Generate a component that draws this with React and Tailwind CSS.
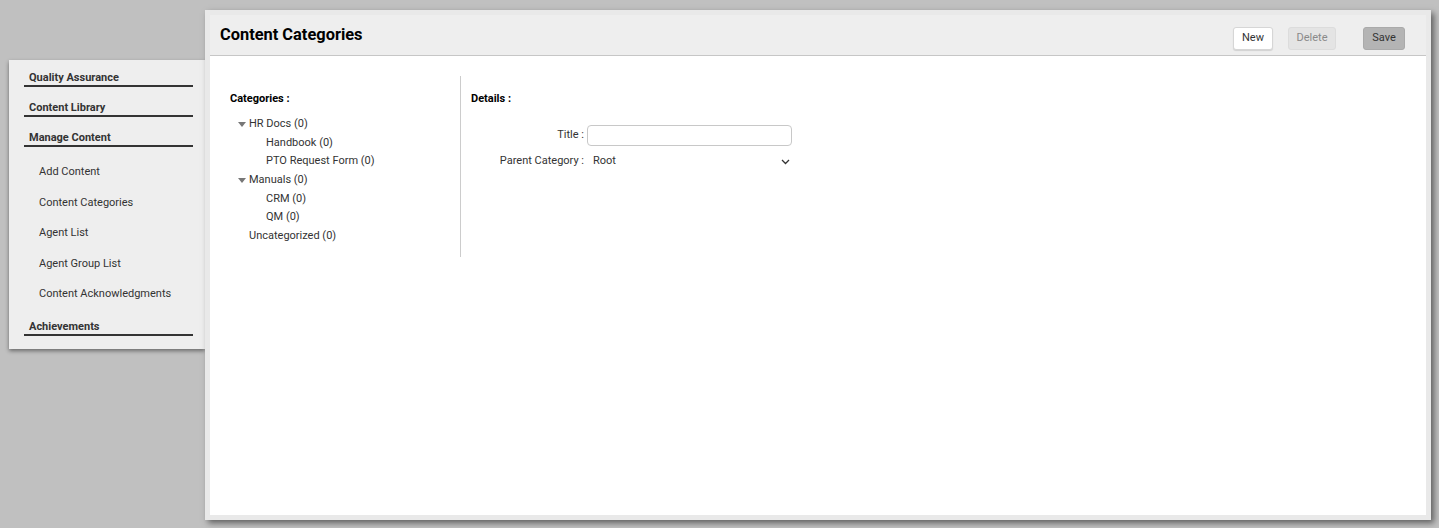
import React from 'react';

const sidebarLinks = ['Add Content', 'Content Categories', 'Agent List', 'Agent Group List', 'Content Acknowledgments'];

const tree = [
  { name: 'HR Docs', count: 0, open: true, children: [{ name: 'Handbook', count: 0 }, { name: 'PTO Request Form', count: 0 }] },
  { name: 'Manuals', count: 0, open: true, children: [{ name: 'CRM', count: 0 }, { name: 'QM', count: 0 }] },
  { name: 'Uncategorized', count: 0 },
];

function Caret() {
  return (
    <svg width="8" height="5" viewBox="0 0 8 5" className="mr-[3px]">
      <path d="M0 0 H8 L4 5 Z" fill="#777" />
    </svg>
  );
}

function Heading({ children, className = '' }) {
  return (
    <div className={`border-b-2 border-[#333] pl-[5px] text-[11px] font-bold leading-[14px] text-[#333] ${className}`}>
      {children}
    </div>
  );
}

function Sidebar() {
  return (
    <div className="z-0 mt-[60px] w-[196px] shrink-0 self-start bg-[#eeeeee] pb-[13px] pl-[15px] pr-[12px] shadow-[0_2px_4px_rgba(0,0,0,0.45)]">
      <Heading className="mt-[11px]">Quality Assurance</Heading>
      <Heading className="mt-[14px]">Content Library</Heading>
      <Heading className="mt-[14px]">Manage Content</Heading>
      <div className="mt-[10px]">
        {sidebarLinks.map((l) => (
          <div key={l} className="flex h-[30.5px] items-center pl-[15px] text-[11px] text-[#333]">
            {l}
          </div>
        ))}
      </div>
      <Heading className="mt-[10px]">Achievements</Heading>
    </div>
  );
}

function TreeRow({ item, depth }) {
  return (
    <>
      <div className="flex h-[18.67px] items-center text-[11px] text-[#333]" style={{ paddingLeft: depth * 17 }}>
        {item.children ? <Caret /> : <span className="inline-block w-[11px]" />}
        <span>
          {item.name} ({item.count})
        </span>
      </div>
      {item.open && item.children.map((c) => <TreeRow key={c.name} item={c} depth={depth + 1} />)}
    </>
  );
}

export default function App() {
  return (
    <div className="flex h-[528px] w-full overflow-hidden bg-[#c0c0c0] pl-[9px] font-['Roboto',sans-serif]">
      <Sidebar />
      <div className="z-10 mt-[10px] flex h-[510px] w-[1226px] shrink-0 flex-col border-[5px] border-[#e9e9e9] bg-white shadow-[3px_3px_6px_rgba(0,0,0,0.5)]">
        <div className="flex h-[41px] shrink-0 items-center border-b border-[#c6c6c6] bg-[#eeeeee] pl-[10px] pr-[21px]">
          <h1 className="text-[16.4px] font-bold text-black">Content Categories</h1>
          <div className="ml-auto mt-[7px] flex items-center">
            <button className="h-[23px] w-[40px] rounded-[3px] border border-[#d6d6d6] bg-white text-[11px] text-[#333] shadow-[0_1px_1px_rgba(0,0,0,0.12)]">New</button>
            <button className="ml-[15px] h-[23px] w-[48px] rounded-[3px] border border-[#dcdcdc] bg-[#e4e4e4] text-[11px] text-[#8a8a8a]">Delete</button>
            <button className="ml-[27px] h-[23px] w-[42px] rounded-[3px] border border-[#aaaaaa] bg-[#b4b4b4] text-[11px] text-[#333]">Save</button>
          </div>
        </div>
        <div className="flex pl-[20px] pt-[20px]">
          <div className="h-[181px] w-[231px] border-r border-[#cccccc] pt-[16px]">
            <div className="text-[11px] font-bold leading-[14px] text-black">Categories :</div>
            <div className="mt-[9px] pl-[8px]">
              {tree.map((t) => (
                <TreeRow key={t.name} item={t} depth={0} />
              ))}
            </div>
          </div>
          <div className="pl-[10px] pt-[16px]">
            <div className="text-[11px] font-bold leading-[14px] text-black">Details :</div>
            <div className="mt-[19px] grid grid-cols-[116px_205px] items-center gap-y-[5px] text-[11px] text-[#333]">
              <div className="pr-[3px] text-right">Title :</div>
              <input className="h-[21px] w-[205px] rounded-[4px] border border-[#c8c8c8] bg-white px-[6px] outline-none" />
              <div className="pr-[3px] text-right">Parent Category :</div>
              <div className="flex h-[21px] items-center pl-[6px] pr-[2px]">
                <span>Root</span>
                <svg width="9" height="6" viewBox="0 0 9 6" className="ml-auto">
                  <path d="M1 1 L4.5 4.5 L8 1" fill="none" stroke="#333" strokeWidth="1.3" />
                </svg>
              </div>
            </div>
          </div>
        </div>
      </div>
    </div>
  );
}
